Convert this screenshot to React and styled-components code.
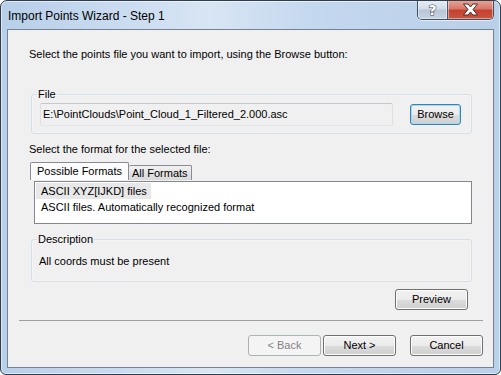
import { createGlobalStyle, styled } from "styled-components";

const Global = createGlobalStyle`
  html, body {
    margin: 0;
    padding: 0;
    background: #ffffff;
  }
  * {
    box-sizing: border-box;
  }
`;

const Window = styled.div`
  width: 501px;
  height: 375px;
  border: 1px solid #2f3d4d;
  border-radius: 7px 7px 6px 6px;
  background: linear-gradient(
    to right,
    #b7cfe9 0%,
    #cadcf0 25%,
    #d8e5f4 42%,
    #c4d8ee 62%,
    #b9d0e9 100%
  );
  box-shadow: inset 0 0 0 1px rgba(255, 255, 255, 0.55);
  display: flex;
  flex-direction: column;
  font-family: "Liberation Sans", Arial, sans-serif;
  overflow: hidden;
`;

const TitleBar = styled.div`
  height: 28px;
  display: flex;
  align-items: flex-start;
  padding-left: 7px;
`;

const Title = styled.div`
  margin-top: 7px;
  font-size: 12px;
  line-height: 16px;
  color: #000;
`;

const CaptionButtons = styled.div`
  margin-left: auto;
  margin-right: 6px;
  margin-top: -1px;
  display: flex;
  height: 20px;
  border: 1px solid #3f4f61;
  border-top: none;
  border-radius: 0 0 5px 5px;
  overflow: hidden;
  box-shadow: 0 1px 0 rgba(255, 255, 255, 0.6);
`;

const CaptionButton = styled.div`
  width: ${(p) => p.$w}px;
  height: 100%;
  display: flex;
  align-items: center;
  justify-content: center;
  background: ${(p) =>
    p.$close
      ? "linear-gradient(to bottom, #e8a898 0%, #d7786a 45%, #c4422f 55%, #c9553f 100%)"
      : "linear-gradient(to bottom, #e9eef5 0%, #d3dce8 45%, #b8c6d7 55%, #c7d3e1 100%)"};
  border-left: ${(p) => (p.$close ? "1px solid #4a5566" : "none")};
  box-shadow: inset 0 0 0 1px rgba(255, 255, 255, 0.45);
`;

const HelpGlyph = styled.span`
  font-family: "DejaVu Sans", sans-serif;
  font-weight: bold;
  font-size: 14px;
  line-height: 14px;
  color: #ffffff;
  -webkit-text-stroke: 1px #3a4656;
  paint-order: stroke fill;
`;

const Frame = styled.div`
  flex: 1;
  padding: 0 6px 6px 6px;
  display: flex;
`;

const Client = styled.div`
  flex: 1;
  background: #f0f0f0;
  border: 1px solid #76828f;
  display: flex;
  flex-direction: column;
  font-size: 11px;
  color: #000;
`;

const Label = styled.div`
  line-height: 13px;
  margin: ${(p) => p.$top}px 0 0 21px;
`;

const Group = styled.fieldset`
  margin: ${(p) => p.$top}px 0 0 23px;
  width: 441px;
  min-width: 0;
  border: 1px solid #d5dfe5;
  border-radius: 3px;
  box-shadow: inset 0 0 0 1px #ffffff40;
  padding: ${(p) => p.$pad};
`;

const Legend = styled.legend`
  font-size: 11px;
  line-height: 13px;
  padding: 0 1px;
  margin-left: 5px;
`;

const FileRow = styled.div`
  display: flex;
  align-items: center;
  gap: 17px;
  padding-left: 8px;
`;

const GroupText = styled.div`
  line-height: 13px;
  padding-left: 7px;
`;

const TextBox = styled.div`
  width: 353px;
  height: 23px;
  border: 1px solid;
  border-color: #c4c7cc #dcdfe3 #e2e5e9 #dcdfe3;
  border-radius: 2px;
  background: #f0f0f0;
  padding: 0 0 0 2px;
  display: flex;
  align-items: center;
  line-height: 13px;
  white-space: nowrap;
`;

const Button = styled.div`
  width: ${(p) => p.$w || 73}px;
  height: 21px;
  border: 1px solid ${(p) => (p.$default ? "#3c7fb1" : p.$disabled ? "#adb2b5" : "#707070")};
  border-radius: 3px;
  background: ${(p) =>
    p.$disabled
      ? "#f4f4f4"
      : "linear-gradient(to bottom, #f2f2f2 0%, #ebebeb 50%, #dddddd 51%, #cfcfcf 100%)"};
  box-shadow: inset 0 0 0 1px
    ${(p) => (p.$default ? "#9fdcf6" : p.$disabled ? "transparent" : "#fcfcfc")};
  color: ${(p) => (p.$disabled ? "#838383" : "#000")};
  display: flex;
  align-items: center;
  justify-content: center;
  line-height: 13px;
  font-size: 11px;
`;

const Tabs = styled.div`
  margin: 6px 0 0 22px;
  display: flex;
  align-items: flex-end;
  height: 18px;
`;

const Tab = styled.div`
  height: ${(p) => (p.$active ? 18 : 15)}px;
  border: 1px solid #898c95;
  border-bottom: none;
  border-left: ${(p) => (p.$active ? "1px solid #898c95" : "none")};
  border-radius: 2px 2px 0 0;
  background: ${(p) =>
    p.$active
      ? "#fcfcfc"
      : "linear-gradient(to bottom, #f2f2f2 0%, #e4e4e4 50%, #d9d9d9 100%)"};
  padding: ${(p) => (p.$active ? "0 6px 0 6px" : "0 3px 0 3px")};
  display: flex;
  align-items: center;
  line-height: 13px;
  font-size: 11px;
`;

const ListBox = styled.div`
  margin: 1px 0 0 26px;
  width: 438px;
  height: 43px;
  border: 1px solid #828790;
  background: #ffffff;
  padding: 1px 0 0 1px;
  display: flex;
  flex-direction: column;
  align-items: flex-start;
`;

const ListItem = styled.div`
  line-height: 16px;
  padding: 0 4px 0 5px;
  background: ${(p) => (p.$selected ? "#e8e8e8" : "transparent")};
`;

const PreviewRow = styled.div`
  margin: 7px 25px 0 0;
  display: flex;
  justify-content: flex-end;
`;

const Separator = styled.div`
  margin: 10px 10px 0 11px;
  height: 1px;
  background: #a0a0a0;
`;

const Footer = styled.div`
  margin: 14px 10px 0 0;
  display: flex;
  justify-content: flex-end;
  gap: 2px;
`;

const Spacer = styled.div`
  width: 10px;
`;

const App = () => {
  return (
    <>
      <Global />
      <Window>
        <TitleBar>
          <Title>Import Points Wizard - Step 1</Title>
          <CaptionButtons>
            <CaptionButton $w={29}>
              <HelpGlyph>?</HelpGlyph>
            </CaptionButton>
            <CaptionButton $w={46} $close>
              <svg width="17" height="13" viewBox="0 0 17 13">
                <path
                  d="M1.5 1 L6.2 1 L8.5 4 L10.8 1 L15.5 1 L11 6.5 L15.5 12 L10.8 12 L8.5 9 L6.2 12 L1.5 12 L6 6.5 Z"
                  fill="#ffffff"
                  stroke="#4a2a26"
                  strokeWidth="1"
                  strokeLinejoin="round"
                />
              </svg>
            </CaptionButton>
          </CaptionButtons>
        </TitleBar>
        <Frame>
          <Client>
            <Label $top={18}>
              Select the points file you want to import, using the Browse button:
            </Label>
            <Group $top={27} $pad="2px 9px 7px 0">
              <Legend>File</Legend>
              <FileRow>
                <TextBox>E:\PointClouds\Point_Cloud_1_Filtered_2.000.asc</TextBox>
                <Button $w={51} $default>
                  Browse
                </Button>
              </FileRow>
            </Group>
            <Label $top={9}>Select the format for the selected file:</Label>
            <Tabs>
              <Tab $active>Possible Formats</Tab>
              <Tab>All Formats</Tab>
            </Tabs>
            <ListBox>
              <ListItem $selected>ASCII XYZ[IJKD] files</ListItem>
              <ListItem>ASCII files. Automatically recognized format</ListItem>
            </ListBox>
            <Group $top={9} $pad="9px 8px 13px 0">
              <Legend>Description</Legend>
              <GroupText>All coords must be present</GroupText>
            </Group>
            <PreviewRow>
              <Button $w={73}>Preview</Button>
            </PreviewRow>
            <Separator />
            <Footer>
              <Button $disabled>&lt; Back</Button>
              <Button>Next &gt;</Button>
              <Spacer />
              <Button>Cancel</Button>
            </Footer>
          </Client>
        </Frame>
      </Window>
    </>
  );
};

export default App;
